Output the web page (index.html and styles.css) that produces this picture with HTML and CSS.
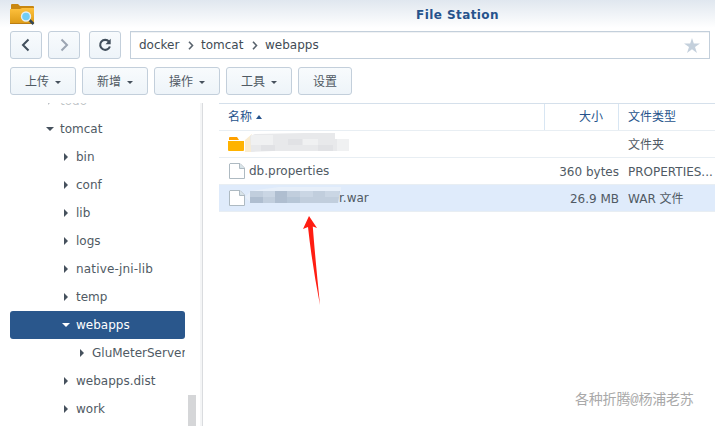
FILE: index.html
```html
<!DOCTYPE html>
<html lang="zh-CN">
<head>
<meta charset="utf-8">
<title>File Station</title>
<link rel="stylesheet" href="styles.css">
</head>
<body>
<div class="window">
  <header class="titlebar">
    <svg class="app-icon" width="26" height="24" viewBox="0 0 26 24">
      <defs><linearGradient id="fold" x1="0" y1="0" x2="0" y2="1"><stop offset="0" stop-color="#ffc23e"/><stop offset="1" stop-color="#dc9a16"/></linearGradient></defs>
      <path d="M1 7V1Q1 0 2 0H8L10 2H23Q24 2 24 3V8Z" fill="#c98711"/>
      <path d="M0 5H10L12 4H24V19Q24 20 23 20H1Q0 20 0 19Z" fill="url(#fold)"/>
      <path d="M0 19.500H23" stroke="#ba7d13"/>
      <path d="M19.500 16L23.500 20" stroke="#344653" stroke-width="2.500"/>
      <circle cx="16" cy="12.500" r="4.500" fill="#72cdf6" stroke="#e4eef3" stroke-width="1.400"/>
    </svg>
    <h1>File Station</h1>
  </header>
  <nav class="address-row">
    <button class="btn nav"><svg width="10" height="14" viewBox="0 0 10 14"><path d="M7.500 1.500L2 7L7.500 12.500" fill="none" stroke="#414e5b" stroke-width="2"/></svg></button>
    <button class="btn nav"><svg width="10" height="14" viewBox="0 0 10 14"><path d="M2.500 1.500L8 7L2.500 12.500" fill="none" stroke="#9ca5b2" stroke-width="2"/></svg></button>
    <button class="btn nav reload"><svg width="14" height="14" viewBox="0 0 14 14"><path d="M11 3.600A5 5 0 1 0 11.900 8.500" fill="none" stroke="#414e5b" stroke-width="2.100"/><path d="M12.700 .8V6.200H7.500Z" fill="#414e5b"/></svg></button>
    <div class="path">
      <span class="w41">docker</span><svg class="sep" width="6" height="9" viewBox="0 0 6 9"><path d="M1 .8L4.500 4.500L1 8.200" /></svg>
      <span class="w43">tomcat</span><svg class="sep" width="6" height="9" viewBox="0 0 6 9"><path d="M1 .8L4.500 4.500L1 8.200" /></svg>
      <span>webapps</span>
      <svg class="star" width="16" height="15" viewBox="0 0 16 15"><path d="M8 0L9.800 5.400H16L11 8.900L13 15L8 11.200L3 15L5 8.900L0 5.400H6.200Z" fill="#c4d0dc"/></svg>
    </div>
  </nav>
  <div class="toolbar">
    <button class="btn tool">上传<i class="down"></i></button>
    <button class="btn tool">新增<i class="down"></i></button>
    <button class="btn tool">操作<i class="down"></i></button>
    <button class="btn tool">工具<i class="down"></i></button>
    <button class="btn tool plain">设置</button>
  </div>
  <main class="content">
    <aside class="sidebar">
      <ul class="tree">
        <li class="l1 faded"><i class="right"></i>todo</li>
        <li class="l1"><i class="down"></i>tomcat</li>
        <li class="l2"><i class="right"></i>bin</li>
        <li class="l2"><i class="right"></i>conf</li>
        <li class="l2"><i class="right"></i>lib</li>
        <li class="l2"><i class="right"></i>logs</li>
        <li class="l2 native"><i class="right"></i>native-jni-lib</li>
        <li class="l2"><i class="right"></i>temp</li>
        <li class="l2 selected"><i class="down"></i>webapps</li>
        <li class="l3"><i class="right"></i>GluMeterServer</li>
        <li class="l2"><i class="right"></i>webapps.dist</li>
        <li class="l2"><i class="right"></i>work</li>
      </ul>
      <div class="scroll-thumb"></div>
    </aside>
    <section class="files">
      <div class="row head"><div class="name">名称<i class="up"></i></div><div class="size">大小</div><div class="type">文件类型</div></div>
      <div class="row"><div class="name">
        <svg class="folder" width="16" height="14" viewBox="0 0 16 14"><path d="M1 3V1Q1 0 2 0H9L11 3Z" fill="#ffa000"/><path d="M0 4H16V13Q16 14 15 14H1Q0 14 0 13Z" fill="#ffb300"/></svg>
        <svg class="mosaic" width="104" height="20" viewBox="0 0 104 20"><path d="M0 7L7 1V19H0Z" fill="#faecd0"/><path d="M5 3L10 1L60 0H90V6H104V18H28L6 19Z" fill="#e8e9eb"/><path d="M6 2H28V12H6ZM58 6H73V12H58ZM92 6H104V18H92Z" fill="#f0f1f2"/><path d="M16 12H30V18H16ZM43 6H57V12H43ZM73 12H88V18H73Z" fill="#e1e2e5"/></svg>
      </div><div class="size"></div><div class="type">文件夹</div></div>
      <div class="row"><div class="name">
        <svg class="doc" width="16" height="16" viewBox="0 0 16 16"><path d="M1 .5H11L15.500 5V15.500H.5V1Z" fill="#fff" stroke="#aebac2"/><path d="M10.500 1V5.500H15" fill="#d5e2e8" stroke="#aebac2"/></svg><span class="db">db.properties</span>
      </div><div class="size">360 bytes</div><div class="type prop">PROPERTIES...</div></div>
      <div class="row current"><div class="name">
        <svg class="doc" width="16" height="16" viewBox="0 0 16 16"><path d="M1 .5H11L15.500 5V15.500H.5V1Z" fill="#fff" stroke="#aebac2"/><path d="M10.500 1V5.500H15" fill="#d5e2e8" stroke="#aebac2"/></svg>
        <svg class="mosaic war-mosaic" width="96" height="20" viewBox="0 0 96 20"><path d="M0 10L6 4L34 0H96V5H6V16Z" fill="#e8f0fa"/><path d="M5 4H95L93 16H5Z" fill="#c1cedd"/><path d="M30 4H42V16H30ZM5 10H18V16H5Z" fill="#afbed0"/><path d="M18 4H30V10H18ZM55 4H68V10H55ZM80 4H94V10H80Z" fill="#cad6e4"/><path d="M42 10H55V16H42Z" fill="#b6c6d7"/></svg><span class="war">r.war</span>
      </div><div class="size">26.9 MB</div><div class="type">WAR 文件</div></div>
    </section>
  </main>
  <svg class="arrow" width="18" height="90" viewBox="0 0 18 90"><path d="M6 0L14 12L9.800 10.500Q12 40 17 89Q9 48 5 11L0 13Z" fill="#ff1d12"/></svg>
  <div class="watermark">各种折腾@杨浦老苏</div>
</div>
</body>
</html>
```
FILE: styles.css
```css
* { box-sizing: border-box; }
body { margin: 0; background: #fff; color: #505a64; font: 12px/16px "DejaVu Sans", "Noto Sans CJK SC", sans-serif; }
.window { position: relative; width: 715px; height: 426px; overflow: hidden; display: flex; flex-direction: column; }
.titlebar { height: 31px; flex: none; padding: 4px 10px 0; display: flex; background: linear-gradient(#e0e7ef, #fff 28px); }
.app-icon { flex: none; }
h1 { margin: 3px 0 0 380px; font-size: 12px; line-height: 16px; letter-spacing: .43px; color: #26538c; white-space: nowrap; }
.address-row { height: 28px; flex: none; display: flex; padding: 0 5px 0 10px; }
.btn { height: 28px; padding: 0; border: 1px solid #c3cfdb; border-radius: 3px; background: linear-gradient(#f8fbfd, #eef4f9); display: flex; align-items: center; justify-content: center; font: inherit; color: #505a64; }
.nav { width: 32px; margin-right: 6px; }
.reload { margin-left: 3px; margin-right: 9px; }
.path { flex: 1; height: 28px; display: flex; align-items: center; padding: 0 9px 0 8px; border: 1px solid #c3cfdb; box-shadow: inset 0 1px #f0f2f4; color: #414b55; }
.path span { white-space: nowrap; }
.w41 { width: 41px; }
.w43 { width: 43px; }
.sep { margin: 0 7px 0 8px; fill: none; stroke: #59636d; stroke-width: 1.6; }
.star { margin-left: auto; }
.toolbar { height: 44px; flex: none; padding: 8px 10px; display: flex; gap: 6px; }
.tool { width: 66px; padding-top: 2px; }
.plain { width: 54px; }
.down, .up, .right { flex: none; display: block; width: 0; height: 0; border: 4px solid transparent; }
.down { border-top-color: #46515d; border-bottom: 0; }
.up { border-bottom-color: #26538c; border-top: 0; border-left-width: 3px; border-right-width: 3px; }
.right { border-left-color: #46515d; border-right: 0; }
.tool .down { margin-left: 6px; border-left-width: 3px; border-right-width: 3px; border-top-width: 3px; }
.content { flex: 1; min-height: 0; display: flex; }
.sidebar { position: relative; width: 203px; flex: none; overflow: hidden; padding-left: 10px; border-right: 1px solid #dadcdf; box-shadow: inset -2px 0 #f4f5f6; }
.tree { list-style: none; width: 175px; margin: -16px 0 0; padding: 0; overflow: hidden; }
.tree li { height: 28px; display: flex; align-items: center; white-space: nowrap; border-radius: 3px; }
.tree i { margin-right: 6px; }
.tree .right { margin: 0 8px 0 2px; }
.l1 { padding-left: 36px; }
.l2 { padding-left: 52px; }
.l3 { padding-left: 68px; }
.native { letter-spacing: .16px; }
.faded { opacity: .35; }
.tree .selected { background: #2a578c; color: #fff; }
.selected .down { border-top-color: #fff; }
.scroll-thumb { position: absolute; left: 188px; top: 292px; width: 8px; height: 40px; background: #d5d6d8; }
.files { flex: 1; margin-left: 16px; min-width: 0; border-top: 1px solid #d5e0eb; }
.row { height: 27px; display: grid; grid-template-columns: 325px 75px 1fr; border-bottom: 1px solid #e8eef3; }
.row > div { display: flex; align-items: center; white-space: nowrap; min-width: 0; }
.name { padding-left: 9px; }
.size { justify-content: flex-end; }
.type { padding-left: 9px; overflow: hidden; }
.row + .row .type { padding-top: 2px; }
.row + .row .size { padding-top: 2px; }
.head { color: #26538c; }
.head .up { margin-left: 4px; }
.head .size { border-left: 1px solid #d8e6f3; border-right: 1px solid #d8e6f3; padding-right: 15px; }
.folder, .doc { flex: none; }
.folder { margin-right: 1px; }
.doc { margin-left: 1px; }
.db { margin-left: 4px; }
.mosaic { flex: none; margin-top: -2px; }
.war-mosaic { position: relative; z-index: 1; }
.war { margin-left: -2px; }
.current { background: #dfebfb; }
.arrow { position: absolute; left: 303px; top: 216px; }
.watermark { position: absolute; left: 575px; top: 392px; font-family: "Liberation Mono", "Noto Sans CJK SC", sans-serif; font-size: 14px; letter-spacing: -.2px; color: #a9a9a9; white-space: nowrap; }
```
